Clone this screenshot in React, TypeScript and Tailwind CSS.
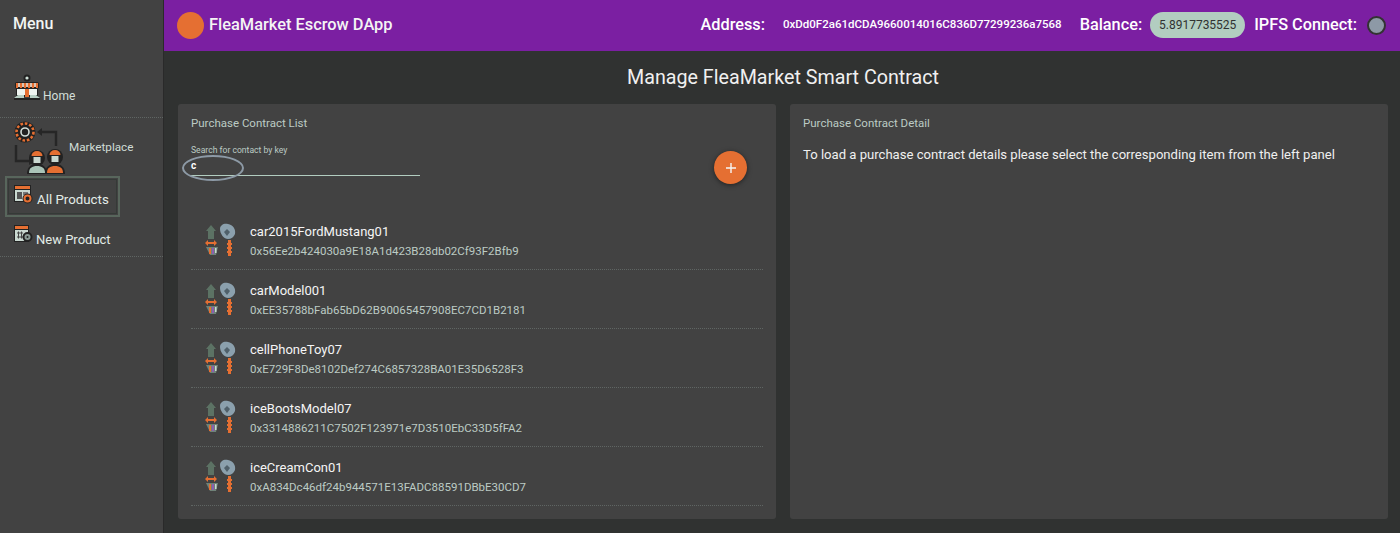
const contracts = [
  { name: 'car2015FordMustang01', address: '0x56Ee2b424030a9E18A1d423B28db02Cf93F2Bfb9' },
  { name: 'carModel001', address: '0xEE35788bFab65bD62B90065457908EC7CD1B2181' },
  { name: 'cellPhoneToy07', address: '0xE729F8De8102Def274C6857328BA01E35D6528F3' },
  { name: 'iceBootsModel07', address: '0x3314886211C7502F123971e7D3510EbC33D5fFA2' },
  { name: 'iceCreamCon01', address: '0xA834Dc46df24b944571E13FADC88591DBbE30CD7' },
];

function HomeIcon() {
  return (
    <svg width="26" height="27" viewBox="0 0 26 27" className="mb-[3px] shrink-0">
      <circle cx="13" cy="4" r="3.5" fill="#222" />
      <circle cx="13" cy="4" r="1.6" fill="#cfe0d8" />
      <rect x="1" y="8" width="24" height="7" rx="2" fill="#222" />
      <path d="M2 9h2v5H2zM6 9h2v5H6zM10 9h2v5h-2zM14 9h2v5h-2zM18 9h2v5h-2zM22 9h2v5h-2z" fill="#e56f32" />
      <path d="M4 9h2v4H4zM8 9h2v4H8zM12 9h2v4h-2zM16 9h2v4h-2zM20 9h2v4h-2z" fill="#d8c4b4" />
      <rect x="2" y="15" width="22" height="8" fill="#222" />
      <rect x="3" y="15" width="8" height="6" fill="#eef4f0" />
      <rect x="15" y="15" width="8" height="6" fill="#eef4f0" />
      <rect x="11" y="15" width="4" height="8" fill="#e56f32" />
      <path d="M0 24l4-3h6v3zM26 24l-4-3h-6v3z" fill="#b8cfc4" />
      <rect x="0" y="24" width="26" height="2" fill="#222" />
    </svg>
  );
}

function MarketIcon() {
  return (
    <svg width="52" height="55" viewBox="0 0 52 55" className="shrink-0">
      <circle cx="12" cy="12" r="10.5" fill="#222" />
      <circle cx="12" cy="12" r="8.5" fill="none" stroke="#e56f32" strokeWidth="2.6" strokeDasharray="2.6 1.8" />
      <circle cx="12" cy="12" r="6.5" fill="#222" />
      <circle cx="12" cy="12" r="4" fill="none" stroke="#d5dfda" strokeWidth="1.6" />
      <path d="M27 12h16v14M3 25v16h14" fill="none" stroke="#262626" strokeWidth="2.4" />
      <path d="M29 8l-5 4 5 4zM16 37l6 4-6 4z" fill="#262626" />
      {/* left worker */}
      <path d="M14 54c0-7 4-10 10-10s10 3 10 10z" fill="#222" />
      <circle cx="24" cy="38" r="8" fill="#222" />
      <path d="M18.5 36a5.5 5 0 0 1 11 0z" fill="#e56f32" />
      <rect x="20.5" y="37" width="7" height="6" fill="#c9d8d0" />
      <path d="M16 53c0-5 3-7 8-7s8 2 8 7z" fill="#aac4b8" />
      {/* right worker */}
      <path d="M32 54c0-7 4-10 10-10s10 3 10 10z" fill="#222" />
      <circle cx="42" cy="37" r="8" fill="#222" />
      <path d="M36.5 35a5.5 5 0 0 1 11 0z" fill="#e56f32" />
      <rect x="38.5" y="36" width="7" height="6" fill="#c9d8d0" />
      <path d="M34 53c0-5 3-7 8-7s8 2 8 7z" fill="#e56f32" />
    </svg>
  );
}

function AllProductsIcon() {
  return (
    <svg width="19" height="19" viewBox="0 0 19 19" className="mb-[5px] shrink-0">
      <rect x="0" y="0" width="17" height="17" fill="#222" />
      <rect x="1" y="1" width="15" height="3" fill="#e56f32" />
      <rect x="1" y="5" width="15" height="11" fill="#c9d8d0" />
      <rect x="3" y="7" width="5" height="7" fill="#555" />
      <rect x="9" y="7" width="5" height="3" fill="#777" />
      <circle cx="13.5" cy="13.5" r="5" fill="#222" />
      <circle cx="13.5" cy="13.5" r="3" fill="none" stroke="#e56f32" strokeWidth="2" />
    </svg>
  );
}

function NewProductIcon() {
  return (
    <svg width="19" height="19" viewBox="0 0 19 19" className="mb-[5px] shrink-0">
      <rect x="0" y="0" width="15" height="17" fill="#222" />
      <rect x="1" y="1" width="13" height="3" fill="#e56f32" />
      <rect x="1" y="5" width="13" height="11" fill="#c9d8d0" />
      <path d="M3 8h6M3 12h6M4.5 6.5v7M7.5 6.5v7" stroke="#444" strokeWidth="1" />
      <circle cx="13.5" cy="12" r="5" fill="#222" />
      <circle cx="13.5" cy="12" r="3" fill="#8a9a94" />
      <circle cx="13.5" cy="12" r="1" fill="#222" />
    </svg>
  );
}

function ContractIcon() {
  return (
    <svg width="32" height="34" viewBox="0 0 32 34" className="shrink-0">
      <path d="M7 2l5 6h-2v8H4V8H2z" fill="#5c7264" />
      <path d="M16 6c0-4 4-6 8-5 5 1 8 5 7 10-1 3-4 5-7 5-4 0-8-5-8-10z" fill="#8ba0ad" />
      <path d="M23 6l3 3-3 4-3-4z" fill="#50606a" />
      <path d="M3 19h8v2H3z" fill="#e56f32" />
      <path d="M4 17l-3 3 3 3zM10 17l3 3-3 3z" fill="#e56f32" />
      <path d="M2 24h12l-2 8H6z" fill="#6f8278" />
      <rect x="5" y="25" width="2" height="6" fill="#e56f32" />
      <rect x="8" y="25" width="2" height="6" fill="#8a5fb0" />
      <rect x="11" y="25" width="1.5" height="5" fill="#c9d8d0" />
      <path d="M24 17h3v3h1v2h-1v2h1v2h-1v2h1v2h-1v3h-3v-3h-1v-2h1v-2h-1v-2h1v-2h-1v-2h1z" fill="#e56f32" />
    </svg>
  );
}

export default function App() {
  return (
    <div className="flex h-[533px] w-[1400px] overflow-hidden bg-[#303231] font-['Roboto',sans-serif] text-white">
      {/* Sidebar */}
      <aside className="flex w-[164px] shrink-0 flex-col border-r border-[#2a2a2a] bg-[#424242]">
        <div className="h-[51px] pl-[13px] pt-[14px] text-[16px] leading-5 font-medium text-[#f2f5f3]">Menu</div>
        <div className="flex h-[67px] items-end border-b border-dotted border-[#5f6563] pb-[13px] pl-[14px]">
          <HomeIcon />
          <span className="ml-[3px] text-[12px] leading-4 text-[#d3dfd9]">Home</span>
        </div>
        <div className="flex h-[57px] items-start pl-[13px] pt-[2px]">
          <MarketIcon />
          <span className="ml-[4px] mt-[19px] text-[11.7px] leading-4 text-[#cfdcd5]">Marketplace</span>
        </div>
        <div className="ml-[5px] mt-[1px] flex h-[41px] w-[115px] items-center gap-[4px] border-2 border-[#58665c] pl-[7px] outline-1 -outline-offset-4 outline-[#353a37]">
          <AllProductsIcon />
          <span className="mt-[7px] text-[13.3px] leading-4 text-[#e3ece7]">All Products</span>
        </div>
        <div className="flex h-[40px] items-center gap-[3px] border-b border-dotted border-[#5f6563] pl-[14px]">
          <NewProductIcon />
          <span className="mt-[6px] text-[13px] leading-4 text-[#e3ece7]">New Product</span>
        </div>
      </aside>

      <div className="flex min-w-0 flex-1 flex-col">
        {/* Top bar */}
        <header className="flex h-[51px] shrink-0 items-center bg-[#7b1fa2] pb-[1px] pl-[13px] pr-[14px]">
          <div className="h-[27px] w-[27px] rounded-full bg-[#e56f32]" />
          <div className="ml-[5px] text-[16.4px] font-medium text-[#f4f4f4]">FleaMarket Escrow DApp</div>
          <div className="ml-auto text-[16.3px] font-medium">Address:</div>
          <div className="ml-[18px] text-[11.5px] font-medium">0xDd0F2a61dCDA9660014016C836D77299236a7568</div>
          <div className="ml-[18px] text-[16.3px] font-medium">Balance:</div>
          <div className="ml-[8px] flex h-[26px] w-[95px] items-center justify-center rounded-full bg-[#b2cdc0] text-[12px] text-[#303231]">5.8917735525</div>
          <div className="ml-[9px] text-[16.3px] font-medium">IPFS Connect:</div>
          <div className="ml-[10px] h-[19px] w-[19px] rounded-full border-2 border-[#333] bg-[#8d99a6]" />
        </header>

        {/* Main */}
        <main className="flex min-h-0 flex-1 flex-col pl-[14px] pr-[12px]">
          <h1 className="h-[53px] pt-[15px] text-center text-[19.7px] leading-6 font-normal text-[#f0f0f0]">Manage FleaMarket Smart Contract</h1>
          <div className="flex h-[415px] gap-[14px]">
            <section className="relative w-[598px] rounded-[3px] bg-[#424242] px-[13px]">
              <div className="pt-[11px] text-[11.5px] leading-4 text-[#bccbc4]">Purchase Contract List</div>
              <div className="mt-[13px] text-[8.6px] leading-3 text-[#bccbc4]">Search for contact by key</div>
              <div className="mt-[3px] h-[17px] w-[229px] border-b border-[#b2cdc0] text-[10px] leading-[13px] font-bold text-white">c</div>
              {/* hand-drawn annotation round the typed letter */}
              <div className="absolute left-[4px] top-[51px] h-[26px] w-[62px] rounded-[50%] border-2 border-[#8d9aa6]" />
              <button className="absolute left-[536px] top-[47px] flex h-[33px] w-[33px] items-center justify-center rounded-full bg-[#e56f32] shadow-[0_1px_5px_rgba(0,0,0,0.5)]">
                <svg width="12" height="12" viewBox="0 0 12 12">
                  <path d="M6 1v10M1 6h10" stroke="#f5f5f5" strokeWidth="1.4" />
                </svg>
              </button>
              <ul className="mt-[35px]">
                {contracts.map((c) => (
                  <li key={c.name} className="flex h-[59px] items-center border-b border-dotted border-[#5f6563] pl-[13px]">
                    <ContractIcon />
                    <div className="ml-[14px] mt-[2px]">
                      <div className="text-[13px] leading-[19px] text-[#f5f5f5]">{c.name}</div>
                      <div className="text-[11.5px] leading-5 text-[#bccbc4]">{c.address}</div>
                    </div>
                  </li>
                ))}
              </ul>
            </section>
            <section className="min-w-0 flex-1 rounded-[3px] bg-[#424242] px-[13px]">
              <div className="pt-[11px] text-[11.5px] leading-4 text-[#bccbc4]">Purchase Contract Detail</div>
              <p className="mt-[14px] text-[13.1px] leading-5 text-[#f0f0f0]">
                To load a purchase contract details please select the corresponding item from the left panel
              </p>
            </section>
          </div>
        </main>
      </div>
    </div>
  );
}
